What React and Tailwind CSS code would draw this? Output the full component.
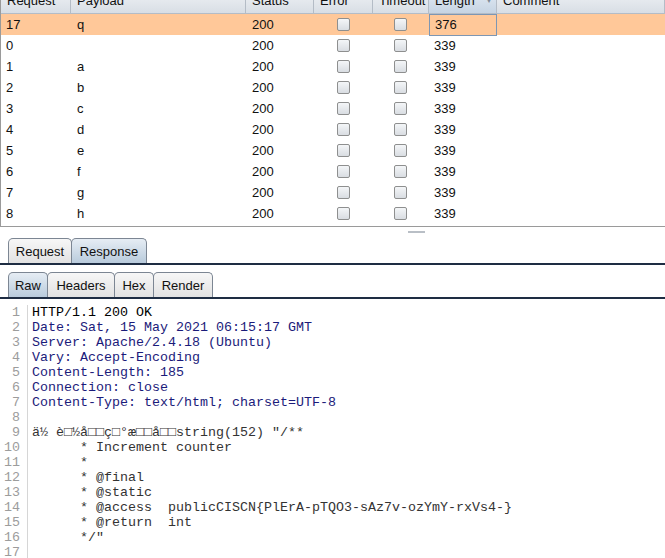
import React from 'react';

const rows = [
    ['17', 'q', '200', '376'],
    ['0', '', '200', '339'],
    ['1', 'a', '200', '339'],
    ['2', 'b', '200', '339'],
    ['3', 'c', '200', '339'],
    ['4', 'd', '200', '339'],
    ['5', 'e', '200', '339'],
    ['6', 'f', '200', '339'],
    ['7', 'g', '200', '339'],
    ['8', 'h', '200', '339'],
];

const headers = ['Request', 'Payload', 'Status', 'Error', 'Timeout', 'Length', 'Comment'];

const cols = 'grid grid-cols-[70px_175px_68px_59px_56px_68px_1fr]';

// line, colour
const code = [
    ['HTTP/1.1 200 OK', 'text-black'],
    ['Date: Sat, 15 May 2021 06:15:17 GMT', 'text-[#1b1b7a]'],
    ['Server: Apache/2.4.18 (Ubuntu)', 'text-[#1b1b7a]'],
    ['Vary: Accept-Encoding', 'text-[#1b1b7a]'],
    ['Content-Length: 185', 'text-[#1b1b7a]'],
    ['Connection: close', 'text-[#1b1b7a]'],
    ['Content-Type: text/html; charset=UTF-8', 'text-[#1b1b7a]'],
    ['', 'text-black'],
    ['ä½ è□½å□□ç□°æ□□å□□string(152) "/**', 'text-[#333]'],
    ['      * Increment counter', 'text-[#333]'],
    ['      *', 'text-[#333]'],
    ['      * @final', 'text-[#333]'],
    ['      * @static', 'text-[#333]'],
    ['      * @access  publicCISCN{PlErA-pTQO3-sAz7v-ozYmY-rxVs4-}', 'text-[#333]'],
    ['      * @return  int', 'text-[#333]'],
    ['      */"', 'text-[#333]'],
    ['', 'text-[#333]'],
];

const Checkbox = () => (
    <div className="w-[13px] h-[13px] rounded-[2px] border border-[#8e8f8f] bg-gradient-to-b from-[#f4f6f8] to-[#d9dde2]" />
);

const Tab = ({ label, active, w }) => (
    <div
        className={
            'h-[25px] pt-[1px] flex items-center justify-center border border-b-0 border-[#7c8693] rounded-t-[5px] -mr-px ' +
            w + ' ' +
            (active
                ? 'bg-gradient-to-b from-[#e6edf4] to-[#b9cbdc]'
                : 'bg-gradient-to-b from-[#f7f7f7] to-[#e2e2e2]')
        }
    >
        {label}
    </div>
);

const App = () => {
    return (
        <div className="w-[665px] h-[558px] bg-white overflow-hidden font-['Liberation_Sans',Arial,sans-serif] text-[13px] text-[#111]">
            {/* results table */}
            <div className="h-[227px] border-l border-b border-[#9a9a9a] overflow-hidden">
                <div className={cols + ' -mt-[11px] h-[25px] bg-gradient-to-b from-[#f1f3f6] to-[#d8dee5] border-b border-[#b4bcc6]'}>
                    {headers.map((h) => (
                        <div
                            key={h}
                            className={
                                'flex items-center pl-[6px] border-r border-[#b4bcc6] ' +
                                (h === 'Length' ? 'bg-gradient-to-b from-[#e4ecf5] to-[#c6d4e3] justify-between pr-[3px]' : '')
                            }
                        >
                            <span>{h}</span>
                            {h === 'Length' && <span className="text-[8px] text-[#7f8a97]">▼</span>}
                        </div>
                    ))}
                </div>
                {rows.map((r, i) => (
                    <div key={i} className={cols + ' h-[21px] ' + (i === 0 ? 'bg-[#ffc899]' : 'bg-white')}>
                        <div className="flex items-center pl-[5px]">{r[0]}</div>
                        <div className="flex items-center pl-[6px]">{r[1]}</div>
                        <div className="flex items-center pl-[6px]">{r[2]}</div>
                        <div className="flex items-center justify-center"><Checkbox /></div>
                        <div className="flex items-center justify-center pr-[2px]"><Checkbox /></div>
                        <div className={'flex items-center pl-[5px] ' + (i === 0 ? 'border border-[#7d96b3]' : '')}>{r[3]}</div>
                        <div />
                    </div>
                ))}
            </div>

            {/* splitter */}
            <div className="h-[10px] pl-[408px] pt-[4px]">
                <div className="w-[17px] h-[2px] bg-[#b9bfc6]" />
            </div>

            {/* request / response tabs */}
            <div className="flex pl-[8px] pt-[1px] border-b-2 border-[#1e2d43]">
                <Tab label="Request" w="w-[64px]" />
                <Tab label="Response" w="w-[76px]" active />
            </div>

            {/* raw / headers tabs */}
            <div className="flex pl-[8px] mt-[7px] border-b-2 border-[#1e2d43]">
                <Tab label="Raw" w="w-[40px]" active />
                <Tab label="Headers" w="w-[68px]" />
                <Tab label="Hex" w="w-[40px]" />
                <Tab label="Render" w="w-[60px]" />
            </div>

            {/* message body */}
            <div className="flex pt-[6px] font-['Liberation_Mono','Courier_New',monospace] text-[13.33px] leading-[15px]">
                <div className="w-[28px] pr-[7px] border-r border-[#d6d6d6] text-right text-[#9c9c9c]">
                    {code.map((_, i) => (
                        <div key={i} className="h-[15px]">{i + 1}</div>
                    ))}
                </div>
                <div className="pl-[4px] whitespace-pre">
                    {code.map(([line, color], i) => (
                        <div key={i} className={'h-[15px] ' + color}>{line}</div>
                    ))}
                </div>
            </div>
        </div>
    );
};

export default App;
